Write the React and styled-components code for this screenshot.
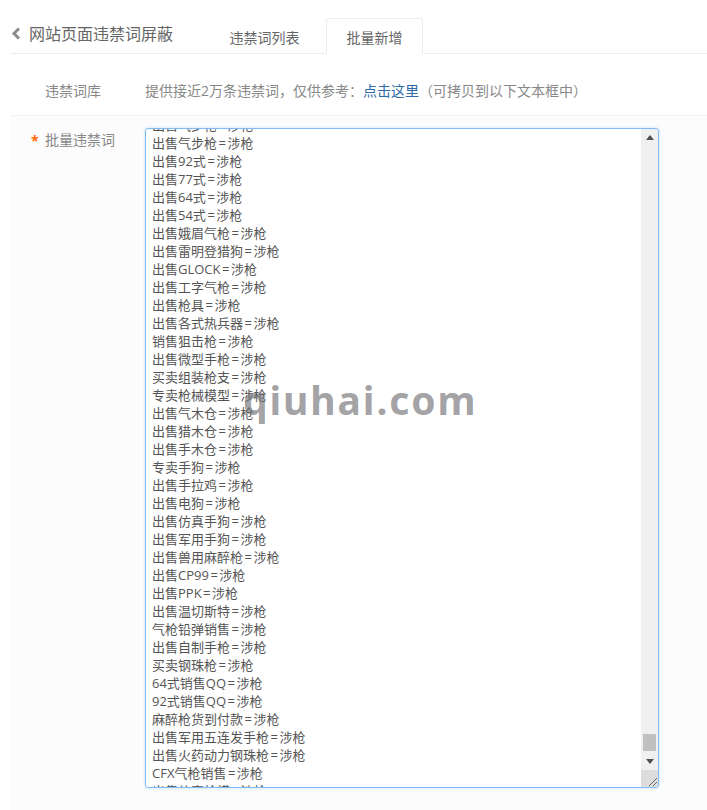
import React from 'react';
import styled, { createGlobalStyle } from 'styled-components';

const GlobalStyle = createGlobalStyle`
  html, body {
    margin: 0;
    padding: 0;
    height: 810px;
    overflow: hidden;
    background: #fff;
  }
  body {
    font-family: "Open Sans", "Noto Sans CJK SC", sans-serif;
    color: #666;
  }
`;

const Page = styled.div`
  position: relative;
  width: 707px;
  height: 810px;
  padding-left: 11px;
  box-sizing: border-box;
  overflow: hidden;
`;

const Header = styled.div`
  display: flex;
  align-items: flex-end;
  height: 54px;
  box-sizing: border-box;
  padding-top: 18px;
  border-bottom: 1px solid #ececec;
`;

const Title = styled.div`
  display: flex;
  align-items: center;
  align-self: flex-start;
  width: 205px;
  height: 28px;
  margin-top: 1px;
  font-size: 16px;
  color: #666;
`;

const BackIcon = styled.svg`
  width: 10px;
  height: 13px;
  margin-right: 8px;
  flex: none;
`;

const Tab = styled.div`
  box-sizing: border-box;
  width: 97px;
  height: 36px;
  margin-bottom: -1px;
  margin-right: 13px;
  padding-top: 9px;
  text-align: center;
  font-size: 14px;
  line-height: 20px;
  color: #666;
  border: 1px solid ${p => (p.$active ? '#ececec' : 'transparent')};
  border-bottom: 1px solid ${p => (p.$active ? '#fff' : 'transparent')};
  border-radius: 3px 3px 0 0;
  background: ${p => (p.$active ? '#fff' : 'transparent')};
`;

const InfoRow = styled.div`
  display: flex;
  height: 62px;
  box-sizing: border-box;
  padding-top: 27px;
  border-bottom: 1px solid #f3f3f3;
  font-size: 14px;
  line-height: 20px;
`;

const Label = styled.div`
  width: 134px;
  flex: none;
  padding-left: 34px;
  box-sizing: border-box;
  color: #888;
  position: relative;
`;

const FormLabel = styled(Label)`
  padding-top: 2px;
`;

const Required = styled.span`
  position: absolute;
  left: 20px;
  top: 3px;
  color: #f60;
  font-weight: 700;
  font-size: 14px;
`;

const InfoText = styled.div`
  color: #888;
  white-space: nowrap;
`;

const LinkText = styled.a`
  color: #2a6aa8;
  text-decoration: none;
`;

const FormRow = styled.div`
  display: flex;
  height: 695px;
  background: #fcfcfc;
  padding-top: 12px;
  box-sizing: border-box;
  font-size: 14px;
  line-height: 20px;
`;

const TextBox = styled.div`
  display: flex;
  width: 514px;
  height: 660px;
  box-sizing: border-box;
  border: 1px solid #7dbcf5;
  border-radius: 3px;
  background: #fff;
  box-shadow: 0 0 3px rgba(125, 188, 245, 0.45);
  overflow: hidden;
`;

const Lines = styled.div`
  flex: 1;
  overflow: hidden;
  padding-left: 6px;
  font-size: 13px;
  line-height: 18px;
  color: #555;
`;

const LinesInner = styled.div`
  margin-top: -13px;
`;

const Line = styled.div`
  height: 18px;
  white-space: nowrap;
`;

const Equals = styled.span`
  margin: 0 1.5px;
`;

const Scrollbar = styled.div`
  width: 17px;
  flex: none;
  background: #f0f0f0;
  display: flex;
  flex-direction: column;
  align-items: center;
`;

const ArrowCell = styled.div`
  height: 17px;
  flex: none;
  display: flex;
  align-items: center;
  justify-content: center;
`;

const ArrowIcon = styled.svg`
  width: 8px;
  height: 5px;
`;

const Track = styled.div`
  flex: 1;
  width: 100%;
  display: flex;
  flex-direction: column;
  justify-content: flex-end;
  align-items: center;
  padding-bottom: 2px;
  box-sizing: border-box;
`;

const Thumb = styled.div`
  width: 13px;
  height: 17px;
  background: #c0c0c0;
`;

const Grip = styled.div`
  width: 17px;
  height: 17px;
  flex: none;
  background: #dcdcdc;
  display: flex;
`;

const Watermark = styled.div`
  position: absolute;
  left: 243px;
  top: 375px;
  font-family: "Noto Sans", sans-serif;
  font-size: 39px;
  line-height: 50px;
  font-weight: 700;
  letter-spacing: 1.9px;
  color: rgba(110, 110, 115, 0.65);
  white-space: nowrap;
`;

const words = [
  '出售气步枪=涉枪', '出售气步枪=涉枪', '出售92式=涉枪', '出售77式=涉枪', '出售64式=涉枪', '出售54式=涉枪',
  '出售娥眉气枪=涉枪', '出售雷明登猎狗=涉枪', '出售GLOCK=涉枪', '出售工字气枪=涉枪', '出售枪具=涉枪',
  '出售各式热兵器=涉枪', '销售狙击枪=涉枪', '出售微型手枪=涉枪', '买卖组装枪支=涉枪', '专卖枪械模型=涉枪',
  '出售气木仓=涉枪', '出售猎木仓=涉枪', '出售手木仓=涉枪', '专卖手狗=涉枪', '出售手拉鸡=涉枪',
  '出售电狗=涉枪', '出售仿真手狗=涉枪', '出售军用手狗=涉枪', '出售兽用麻醉枪=涉枪', '出售CP99=涉枪',
  '出售PPK=涉枪', '出售温切斯特=涉枪', '气枪铅弹销售=涉枪', '出售自制手枪=涉枪', '买卖钢珠枪=涉枪',
  '64式销售QQ=涉枪', '92式销售QQ=涉枪', '麻醉枪货到付款=涉枪', '出售军用五连发手枪=涉枪', '出售火药动力钢珠枪=涉枪',
  'CFX气枪销售=涉枪', '出售仿真枪模=涉枪',
];

export default function App() {
  return (
    <Page>
      <GlobalStyle />
      <Header>
        <Title>
          <BackIcon viewBox="0 0 10 13">
            <path d="M8 1.5 3 6.5l5 5" fill="none" stroke="#8c8c8c" strokeWidth="3" />
          </BackIcon>
          网站页面违禁词屏蔽
        </Title>
        <Tab>违禁词列表</Tab>
        <Tab $active>批量新增</Tab>
      </Header>
      <InfoRow>
        <Label>违禁词库</Label>
        <InfoText>
          提供接近2万条违禁词，仅供参考：<LinkText>点击这里</LinkText>（可拷贝到以下文本框中）
        </InfoText>
      </InfoRow>
      <FormRow>
        <FormLabel>
          <Required>*</Required>
          批量违禁词
        </FormLabel>
        <TextBox>
          <Lines>
            <LinesInner>
              {words.map((w, i) => {
                const [left, right] = w.split('=');
                return (
                  <Line key={i}>
                    {left}
                    <Equals>=</Equals>
                    {right}
                  </Line>
                );
              })}
            </LinesInner>
          </Lines>
          <Scrollbar>
            <ArrowCell>
              <ArrowIcon viewBox="0 0 8 5">
                <path d="M4 0 8 5H0z" fill="#505050" />
              </ArrowIcon>
            </ArrowCell>
            <Track>
              <Thumb />
            </Track>
            <ArrowCell>
              <ArrowIcon viewBox="0 0 8 5">
                <path d="M0 0h8L4 5z" fill="#505050" />
              </ArrowIcon>
            </ArrowCell>
            <Grip>
              <svg width="17" height="17" viewBox="0 0 17 17">
                <path d="M8 16 16 8M12 16l4-4" stroke="#666" strokeWidth="1" fill="none" />
              </svg>
            </Grip>
          </Scrollbar>
        </TextBox>
      </FormRow>
      <Watermark>qiuhai.com</Watermark>
    </Page>
  );
}
